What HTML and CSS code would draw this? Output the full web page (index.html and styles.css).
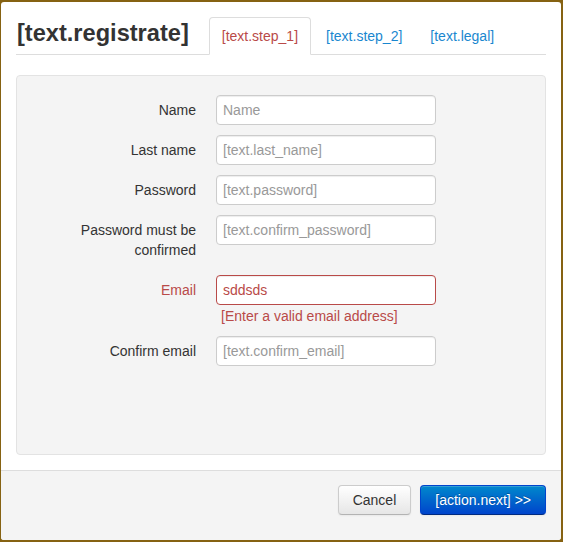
FILE: index.html
```html
<!DOCTYPE html>
<html>
<head>
<meta charset="utf-8">
<link rel="stylesheet" href="styles.css">
</head>
<body>
<div class="modal">
  <div class="modal-header">
    <h1 class="title">[text.registrate]</h1>
    <ul class="tabs">
      <li class="tab active"><a>[text.step_1]</a></li>
      <li class="tab"><a>[text.step_2]</a></li>
      <li class="tab"><a>[text.legal]</a></li>
    </ul>
  </div>
  <div class="modal-body">
    <form class="well">
      <div class="group">
        <label class="label">Name</label>
        <div class="controls"><input class="input" type="text" placeholder="Name"></div>
      </div>
      <div class="group">
        <label class="label">Last name</label>
        <div class="controls"><input class="input" type="text" placeholder="[text.last_name]"></div>
      </div>
      <div class="group">
        <label class="label">Password</label>
        <div class="controls"><input class="input" type="text" placeholder="[text.password]"></div>
      </div>
      <div class="group">
        <label class="label">Password must be confirmed</label>
        <div class="controls"><input class="input" type="text" placeholder="[text.confirm_password]"></div>
      </div>
      <div class="group error">
        <label class="label">Email</label>
        <div class="controls">
          <input class="input" type="text" value="sddsds">
          <div class="help">[Enter a valid email address]</div>
        </div>
      </div>
      <div class="group">
        <label class="label">Confirm email</label>
        <div class="controls"><input class="input" type="text" placeholder="[text.confirm_email]"></div>
      </div>
    </form>
  </div>
  <div class="modal-footer">
    <button class="btn" type="button">Cancel</button>
    <button class="btn btn-primary" type="button">[action.next] &gt;&gt;</button>
  </div>
</div>
</body>
</html>
```

FILE: styles.css
```css
* { box-sizing: border-box; }
html, body { margin: 0; padding: 0; }
body {
  background: #866212;
  font-family: "Liberation Sans", Arial, sans-serif;
  font-size: 14px;
  line-height: 20px;
  color: #333;
  width: 563px;
  height: 542px;
  overflow: hidden;
  padding: 2px 2px 2px 1px;
}
.modal {
  width: 560px;
  height: 538px;
  background: #fff;
  border-radius: 3px;
  display: flex;
  flex-direction: column;
  overflow: hidden;
}
.modal-header {
  margin: 0 15px;
  padding-top: 15px;
  display: flex;
  align-items: baseline;
  border-bottom: 1px solid #ddd;
}
.title {
  margin: 0 20px 0 1px;
  font-size: 23.6px;
  line-height: 30px;
  font-weight: bold;
  color: #333;
}
.tabs {
  list-style: none;
  margin: 0 0 -1px 0;
  padding: 0;
  display: flex;
}
.tab { margin-right: 2px; }
.tab a {
  display: block;
  padding: 8px 12px;
  line-height: 20px;
  border: 1px solid transparent;
  border-radius: 4px 4px 0 0;
  color: #1a87cf;
}
.tab.active a {
  color: #b94a48;
  background: #fff;
  border-color: #ddd #ddd transparent;
}
.modal-body {
  padding: 20px 15px 15px;
}
.well {
  margin: 0;
  height: 380px;
  background: #f4f4f4;
  border: 1px solid #e3e3e3;
  border-radius: 4px;
  padding: 19px 19px;
}
.group {
  display: flex;
  margin-bottom: 10px;
}
.label {
  width: 160px;
  flex: none;
  text-align: right;
  padding: 5px 0;
  line-height: 20px;
  color: #333;
}
.controls {
  margin-left: 20px;
}
.input {
  display: block;
  width: 220px;
  height: 30px;
  margin: 0;
  padding: 4px 6px;
  border: 1px solid #ccc;
  border-radius: 4px;
  background: #fff;
  font-family: "Liberation Sans", Arial, sans-serif;
  font-size: 14px;
  line-height: 20px;
  color: #555;
  box-shadow: inset 0 1px 1px rgba(0,0,0,0.075);
}
.input::placeholder { color: #999; }
.error .label { color: #b94a48; }
.error .input { border-color: #b94a48; color: #b94a48; }
.help {
  margin-top: 1px;
  padding-left: 5px;
  color: #b94a48;
  line-height: 20px;
}
.modal-footer {
  flex: 1;
  border-top: 1px solid #ddd;
  background: #f4f4f4;
  padding: 14px 15px;
  display: flex;
  justify-content: flex-end;
  align-items: flex-start;
  gap: 9px;
}
.btn {
  height: 30px;
  padding: 4px 14px;
  font-family: "Liberation Sans", Arial, sans-serif;
  font-size: 14px;
  line-height: 20px;
  color: #333;
  border: 1px solid #ccc;
  border-bottom-color: #b3b3b3;
  border-radius: 4px;
  background: linear-gradient(#ffffff, #e6e6e6);
  box-shadow: inset 0 1px 0 rgba(255,255,255,0.2), 0 1px 2px rgba(0,0,0,0.05);
}
.btn-primary {
  color: #fff;
  border-color: #0044cc #0044cc #002a80;
  background: linear-gradient(#0088cc, #0044cc);
  text-shadow: 0 -1px 0 rgba(0,0,0,0.25);
}
```
